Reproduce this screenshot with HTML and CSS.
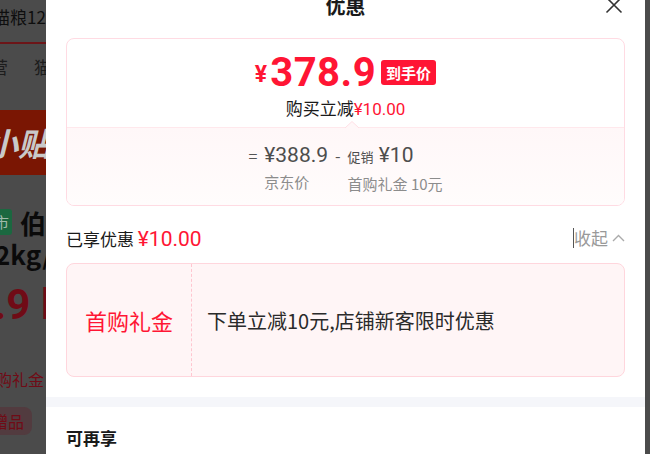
FILE: index.html
```html
<!DOCTYPE html>
<html lang="zh-CN">
<head>
  <meta charset="UTF-8" />
  <meta name="viewport" content="width=device-width, initial-scale=1.0" />
  <title>优惠</title>
  <link rel="stylesheet" href="styles.css">
</head>
<body>
  <!-- page behind the sheet (dimmed) -->
  <div class="page">
    <div class="page-title">猫粮12kg</div>
    <div class="page-tabs"><span>营</span><i class="tab-sep"></i><span>猫</span></div>
    <div class="page-banner">小贴</div>
    <div class="page-name"><span class="tag-green">市</span>伯</div>
    <div class="page-name2">2kg/</div>
    <div class="page-price">.9 l</div>
    <div class="page-gift">购礼金</div>
    <div class="page-gift-tag">赠品</div>
  </div>

  <div class="sheet">
    <header class="sheet-head">
      <h2 class="sheet-title">优惠</h2>
      <svg class="close" width="18" height="18" viewBox="0 0 18 18">
        <path d="M1.5 1.5 L16.5 16.5 M16.5 1.5 L1.5 16.5" stroke="#333" stroke-width="1.6" fill="none" />
      </svg>
    </header>

    <div class="sheet-body">
      <div class="deal">
        <div class="deal-top">
          <div class="deal-price">
            <span class="yen">¥</span><span class="num">378.9</span><span class="badge">到手价</span>
          </div>
          <div class="deal-sub">购买立减<em>¥10.00</em></div>
        </div>
        <div class="deal-bottom">
          <svg class="notch" width="14" height="7" viewBox="0 0 14 7">
            <path d="M0 7 L7 0.5 L14 7 Z" fill="#fff7f8" />
            <path d="M0 7 L7 0.5 L14 7" stroke="#ffdfe5" stroke-width="1" fill="none" />
          </svg>
          <div class="calc">
            <span class="op">=</span>
            <div class="calc-item">
              <div class="calc-val">¥388.9</div>
              <div class="calc-label">京东价</div>
            </div>
            <span class="op">-</span>
            <div class="calc-item">
              <div class="calc-val"><small>促销</small> ¥10</div>
              <div class="calc-label">首购礼金 10元</div>
            </div>
          </div>
        </div>
      </div>

      <div class="enjoyed">
        <div>已享优惠 <em>¥10.00</em></div>
        <div class="fold">收起
          <svg width="13" height="8" viewBox="0 0 13 8"><path d="M1 7 L6.5 1.5 L12 7" stroke="#aaa" stroke-width="1.4" fill="none" /></svg>
        </div>
      </div>

      <div class="coupon">
        <div class="coupon-name">首购礼金</div>
        <div class="coupon-desc">下单立减10元,店铺新客限时优惠</div>
      </div>
    </div>

    <div class="divider"></div>

    <div class="more">可再享</div>
  </div>
</body>
</html>
```

FILE: styles.css
```css
* {
  margin: 0;
  padding: 0;
  box-sizing: border-box;
}

html, body {
  width: 650px;
  height: 454px;
  overflow: hidden;
}

body {
  position: relative;
  font-family: "Noto Sans CJK SC", "Noto Sans", sans-serif;
  background: #4b4b4b;
  color: #1a1a1a;
}

em {
  font-style: normal;
}

/* dimmed page */
.page {
  width: 46px;
  overflow: hidden;
  white-space: nowrap;
}

.page-title {
  height: 42px;
  line-height: 34px;
  font-size: 17px;
  margin-left: -7px;
  color: #0e0e0e;
}

.page-tabs {
  height: 68px;
  border-top: 2px solid #6c1518;
  display: flex;
  align-items: center;
  font-size: 17px;
  color: #1c1c1c;
  margin-left: -9px;
}

.page-tabs span {
  line-height: 46px;
  margin-top: -20px;
}

.tab-sep {
  width: 1px;
  height: 14px;
  background: #5a5a5a;
  margin: -20px 15px 0 11px;
}

.page-banner {
  height: 65px;
  line-height: 64px;
  background: #7a1603;
  color: #c9c9c9;
  font-size: 32px;
  font-weight: 700;
  font-style: italic;
  text-indent: -14px;
}

.page-name {
  margin-top: 30px;
  height: 34px;
  display: flex;
  align-items: center;
  font-size: 26px;
  font-weight: 700;
  color: #0a0a0a;
  margin-left: -10px;
}

.tag-green {
  display: inline-block;
  width: 25px;
  height: 26px;
  line-height: 26px;
  background: #1b6840;
  color: #9fb9aa;
  font-size: 15px;
  font-weight: 400;
  text-align: right;
  padding-right: 3px;
  border-radius: 0 3px 3px 0;
  margin-right: 8px;
}

.page-name2 {
  height: 40px;
  line-height: 30px;
  font-size: 26px;
  font-weight: 700;
  color: #0a0a0a;
  margin-left: -5px;
}

.page-price {
  height: 70px;
  line-height: 52px;
  font-family: Roboto, sans-serif;
  font-size: 42px;
  font-weight: 700;
  color: #700b16;
  margin-left: -6px;
}

.page-gift {
  height: 54px;
  line-height: 60px;
  font-size: 16px;
  color: #700b16;
  margin-left: -4px;
}

.page-gift-tag {
  margin-top: 4px;
  width: 32px;
  height: 28px;
  line-height: 28px;
  background: #523b3f;
  border-radius: 0 8px 8px 0;
  font-size: 16px;
  color: #700b16;
  text-indent: -8px;
}

/* bottom sheet */
.sheet {
  position: absolute;
  top: 0;
  left: 46px;
  width: 599px;
  height: 454px;
  background: #fff;
}

.sheet-head {
  position: relative;
  height: 38px;
  display: flex;
  justify-content: center;
}

.sheet-title {
  margin-top: -5px;
  font-size: 20px;
  line-height: 22px;
  font-weight: 700;
  color: #1a1a1a;
}

.close {
  position: absolute;
  right: 22px;
  top: -4px;
}

.sheet-body {
  padding: 0 20px;
}

.deal {
  border: 1px solid #ffdbe3;
  border-radius: 8px;
  overflow: hidden;
}

.deal-top {
  height: 88px;
  padding-top: 11px;
  text-align: center;
}

.deal-price {
  height: 44px;
  display: flex;
  justify-content: center;
  align-items: center;
  color: #ff1534;
  font-family: Roboto, sans-serif;
  font-weight: 700;
}

.yen {
  font-size: 23px;
  margin-right: 3px;
  margin-top: 4px;
}

.num {
  font-size: 40px;
  letter-spacing: 0.5px;
}

.badge {
  margin-left: 5px;
  padding: 0 5px;
  height: 25px;
  line-height: 25px;
  background: #ff1534;
  color: #fff;
  font-family: "Noto Sans CJK SC", sans-serif;
  font-size: 15px;
  border-radius: 3px;
  margin-top: 1px;
}

.deal-sub {
  margin-top: 3px;
  font-size: 17px;
  line-height: 22px;
  color: #1a1a1a;
}

.deal-sub em {
  color: #ff1534;
  font-family: Roboto, sans-serif;
}

.deal-bottom {
  position: relative;
  height: 78px;
  padding-top: 14px;
  border-top: 1px solid #ffe8ec;
  background: linear-gradient(#fff7f8, #fffcfc);
}

.notch {
  position: absolute;
  left: 278px;
  top: -7px;
}

.calc {
  display: flex;
  justify-content: center;
  gap: 7px;
}

.op {
  font-size: 16px;
  line-height: 26px;
  color: #555;
}

.calc-val {
  font-family: Roboto, sans-serif;
  font-size: 21px;
  line-height: 26px;
  color: #4d4d4d;
}

.calc-val small {
  font-family: "Noto Sans CJK SC", sans-serif;
  font-size: 13px;
}

.calc-label {
  margin-top: 5px;
  font-size: 15px;
  line-height: 18px;
  color: #8c8c8c;
}

.enjoyed {
  margin-top: 20px;
  height: 24px;
  display: flex;
  justify-content: space-between;
  align-items: center;
  font-size: 17px;
  color: #1a1a1a;
}

.enjoyed em {
  color: #ff1534;
  font-family: Roboto, sans-serif;
  font-size: 21px;
}

.fold {
  display: flex;
  align-items: center;
  gap: 4px;
  font-size: 17px;
  color: #999;
  border-left: 1px solid #555;
  line-height: 20px;
}

.coupon {
  margin-top: 13px;
  height: 114px;
  display: flex;
  align-items: center;
  background: #fff5f6;
  border: 1px solid #ffd6dd;
  border-radius: 8px;
}

.coupon-name {
  width: 125px;
  height: 100%;
  display: flex;
  align-items: center;
  justify-content: center;
  border-right: 1px dashed #ffc6d0;
  font-size: 22px;
  color: #ff1534;
}

.coupon-desc {
  padding-left: 15px;
  font-size: 20px;
  color: #2a2a2a;
}

.divider {
  margin-top: 20px;
  height: 10px;
  background: #f5f6fa;
}

.more {
  padding: 19px 20px 0;
  font-size: 17px;
  line-height: 24px;
  font-weight: 700;
  color: #1a1a1a;
}
```
